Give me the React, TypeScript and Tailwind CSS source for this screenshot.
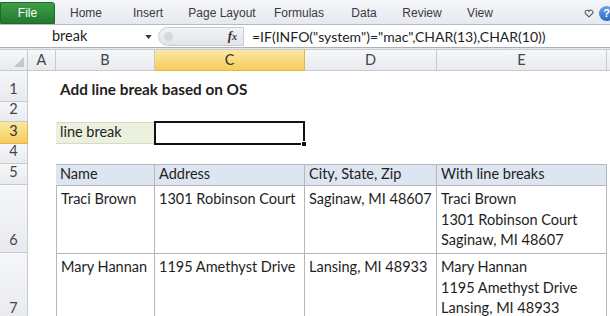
const tabs = [
  { label: 'Home', w: 'w-[58px]' },
  { label: 'Insert', w: 'w-[66px]' },
  { label: 'Page Layout', w: 'w-[82px]' },
  { label: 'Formulas', w: 'w-[72px]' },
  { label: 'Data', w: 'w-[58px]' },
  { label: 'Review', w: 'w-[58px]' },
  { label: 'View', w: 'w-[58px]' },
]

const cols = ['A', 'B', 'C', 'D', 'E']

const cellFont = "font-['Lato','Liberation_Sans',sans-serif] text-[14.5px] text-[#1e1e1e]"

function RowHead({ n, active }: { n: number; active?: boolean }) {
  return (
    <div
      className={`flex items-end justify-center pb-[1px] border-b border-r ${cellFont} ${
        active
          ? 'bg-gradient-to-b from-[#fbe7a1] to-[#f6cd5a] border-[#e2b54a] text-[#333]'
          : 'bg-gradient-to-b from-[#f6f7f9] to-[#e8eaee] border-[#c6cad1] text-[#444]'
      }`}
    >
      {n}
    </div>
  )
}

function T({ children, className = '' }: { children?: React.ReactNode; className?: string }) {
  return <div className={`px-[4px] ${cellFont} ${className}`}>{children}</div>
}

export default function App() {
  return (
    <div className="w-[610px] h-[316px] overflow-hidden bg-white flex flex-col select-none">
      {/* ribbon tabs */}
      <div className="h-[25px] shrink-0 flex items-end bg-gradient-to-b from-[#f4f6f9] to-[#e6e9ee] border-b border-[#b4bac4] font-['Liberation_Sans',sans-serif] text-[12px] text-[#3a3a3a]">
        <div className="w-[55px] h-[22px] rounded-tr-[3px] bg-gradient-to-b from-[#3f9e48] to-[#227a2e] text-white flex items-center justify-center border border-[#1d6b27]">
          File
        </div>
        <div className="w-[2px]" />
        {tabs.map((t) => (
          <div key={t.label} className={`${t.w} h-[22px] flex items-center justify-center`}>
            {t.label}
          </div>
        ))}
        <div className="flex-1" />
        <div className="h-[22px] flex items-center gap-[5px] -mr-[4px]">
          <svg viewBox="0 0 12 10" className="w-[10px] h-[9px]" fill="none" stroke="#555" strokeWidth="1.3">
            <path d="M6 9 L1.5 4.5 A2.2 2.2 0 0 1 6 2.5 A2.2 2.2 0 0 1 10.5 4.5 Z" />
          </svg>
          <div className="w-[15px] h-[15px] rounded-full bg-gradient-to-b from-[#6fa3e6] to-[#2a68c4] text-white text-[11px] font-bold flex items-center justify-center">
            ?
          </div>
        </div>
      </div>

      {/* formula bar */}
      <div className="h-[23px] shrink-0 flex items-center bg-white border-b border-[#a9b0bb]">
        <div className={`w-[158px] h-full flex items-center relative pl-[52px] ${cellFont}`}>
          break
          <svg viewBox="0 0 8 5" className="absolute left-[145px] top-[10px] w-[7px] h-[4px]">
            <path d="M0 0 H8 L4 5 Z" fill="#333" />
          </svg>
        </div>
        <div className="w-[86px] h-[19px] rounded-l-full bg-gradient-to-b from-[#f2f3f5] to-[#e2e4e8] border border-[#c9cdd3] flex items-center pl-[5px]">
          <div className="w-[9px] h-[9px] rounded-full bg-[#d5d8dd]" />
          <div className="flex-1" />
          <span className="font-['Liberation_Serif',serif] italic font-bold text-[13px] text-[#333] pr-[6px]">
            f<span className="text-[10px]">x</span>
          </span>
        </div>
        <div className="pl-[8px] font-['Lato','Liberation_Sans',sans-serif] text-[14px] text-[#1e1e1e]">
          =IF(INFO("system")="mac",CHAR(13),CHAR(10))
        </div>
      </div>
      <div className="h-[2px] shrink-0 bg-[#e4e7eb] border-b border-[#c9ced6]" />

      {/* sheet */}
      <div className="shrink-0 grid grid-cols-[28px_28px_99px_150px_132px_170px_1fr] grid-rows-[21px_31px_20px_22px_20px_21px_68px_68px]">
        {/* column headers */}
        <div className="bg-gradient-to-b from-[#f6f7f9] to-[#e8eaee] border-b border-r border-[#c6cad1] relative">
          <svg viewBox="0 0 10 10" className="absolute right-[3px] bottom-[3px] w-[10px] h-[10px]">
            <path d="M10 0 V10 H0 Z" fill="#c3c7cd" />
          </svg>
        </div>
        {cols.map((c) => (
          <div
            key={c}
            className={`flex items-center justify-center border-b border-r ${cellFont} ${
              c === 'C'
                ? 'bg-gradient-to-b from-[#fbe7a1] to-[#f6cd5a] border-[#e2b54a] text-[#333]'
                : 'bg-gradient-to-b from-[#f6f7f9] to-[#e8eaee] border-[#c6cad1] text-[#444]'
            }`}
          >
            {c}
          </div>
        ))}
        <div className="bg-gradient-to-b from-[#f6f7f9] to-[#e8eaee] border-b border-[#c6cad1]" />

        {/* row 1 */}
        <RowHead n={1} />
        <div />
        <T className="col-span-3 flex items-end pb-[1px] font-bold text-[15.3px]">Add line break based on OS</T>
        <div />
        <div />

        {/* row 2 */}
        <RowHead n={2} />
        <div className="col-span-6" />

        {/* row 3 */}
        <RowHead n={3} active />
        <div />
        <T className="flex items-end bg-[#ebf0df] border-y border-[#d6dac8]">line break</T>
        <div className="relative border-2 border-[#111] -my-[1px] -ml-[1px]">
          <div className="absolute -right-[4px] -bottom-[4px] w-[6px] h-[6px] bg-[#111] border border-white" />
        </div>
        <div />
        <div />
        <div />

        {/* row 4 */}
        <RowHead n={4} />
        <div className="col-span-6" />

        {/* row 5 */}
        <RowHead n={5} />
        <div />
        {['Name', 'Address', 'City, State, Zip', 'With line breaks'].map((h) => (
          <T key={h} className="flex items-end bg-[#dce5f0] border-t border-r border-[#b3b8bf] first:border-l">
            {h}
          </T>
        ))}
        <div />

        {/* row 6 */}
        <RowHead n={6} />
        <div />
        <T className="border-t border-r border-l border-[#b3b8bf] pt-[3px] leading-[20.5px]">Traci Brown</T>
        <T className="border-t border-r border-[#b3b8bf] pt-[3px] leading-[20.5px]">1301 Robinson Court</T>
        <T className="border-t border-r border-[#b3b8bf] pt-[3px] leading-[20.5px]">Saginaw, MI 48607</T>
        <T className="border-t border-r border-[#b3b8bf] pt-[3px] leading-[20.5px]">
          Traci Brown
          <br />
          1301 Robinson Court
          <br />
          Saginaw, MI 48607
        </T>
        <div />

        {/* row 7 */}
        <RowHead n={7} />
        <div />
        <T className="border-t border-r border-l border-[#b3b8bf] pt-[3px] leading-[20.5px]">Mary Hannan</T>
        <T className="border-t border-r border-[#b3b8bf] pt-[3px] leading-[20.5px]">1195 Amethyst Drive</T>
        <T className="border-t border-r border-[#b3b8bf] pt-[3px] leading-[20.5px]">Lansing, MI 48933</T>
        <T className="border-t border-r border-[#b3b8bf] pt-[3px] leading-[20.5px]">
          Mary Hannan
          <br />
          1195 Amethyst Drive
          <br />
          Lansing, MI 48933
        </T>
        <div />
      </div>
    </div>
  )
}
